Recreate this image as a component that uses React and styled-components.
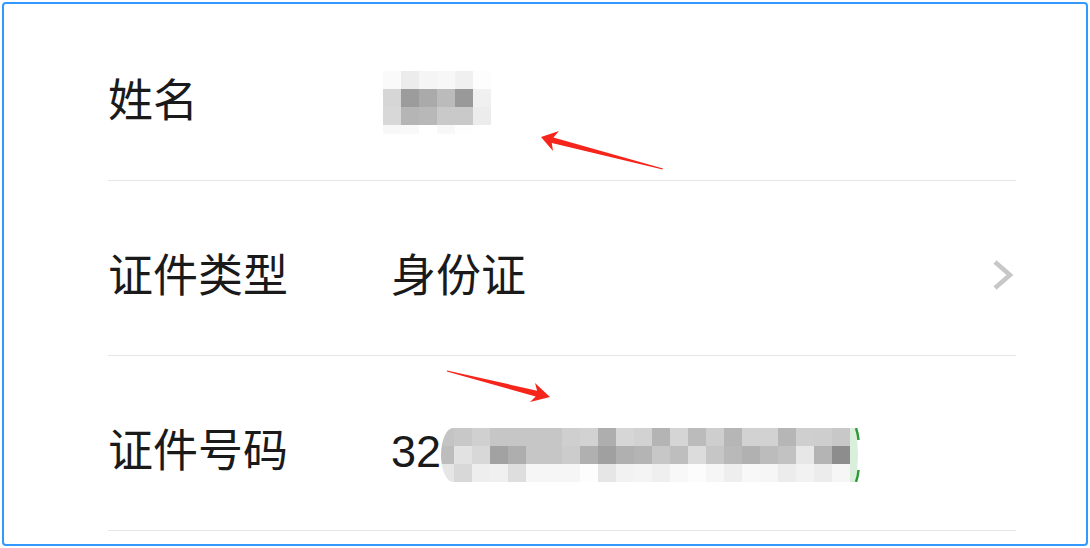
import React from "react";
import styled, { createGlobalStyle } from "styled-components";

const Global = createGlobalStyle`
  html, body { margin: 0; padding: 0; background: #ffffff; }
  body { font-family: "Liberation Sans", "Noto Sans CJK SC", sans-serif; }
`;

const Page = styled.div`
  position: relative;
  width: 1090px;
  height: 548px;
  overflow: hidden;
  background: #ffffff;
`;

const Frame = styled.div`
  box-sizing: border-box;
  margin: 2px;
  width: 1086px;
  height: 544px;
  border: 2px solid #3399ff;
  border-radius: 4px;
  padding: 2px 70px 0 104px;
`;

const List = styled.div`
  display: flex;
  flex-direction: column;
`;

const Row = styled.div`
  box-sizing: border-box;
  height: 175px;
  padding-top: 18px;
  display: flex;
  align-items: center;
  border-bottom: 1px solid #e6e6e6;
`;

const Label = styled.div`
  width: 283px;
  flex: none;
  font-size: 45px;
  line-height: 60px;
  color: #1a1a1a;
  font-family: "Liberation Sans", "Noto Sans CJK SC", sans-serif;
`;

const Value = styled.div`
  flex: 1;
  display: flex;
  align-items: center;
  font-size: 45px;
  line-height: 60px;
  color: #1a1a1a;
  font-family: "Liberation Sans", "Noto Sans CJK SC", sans-serif;
`;

const Mosaic = styled.div`
  display: grid;
  grid-template-columns: ${(p) => p.$cols};
  grid-template-rows: ${(p) => p.$rows};
  margin-left: ${(p) => p.$ml || 0}px;
  margin-top: ${(p) => p.$mt || 0}px;
  border-radius: ${(p) => p.$radius || "0"};
  overflow: hidden;
`;

const Cell = styled.span`
  display: block;
  background: ${(p) => p.$c};
`;

const Chevron = styled.svg`
  flex: none;
  width: 22px;
  height: 32px;
  margin-right: 2px;
  margin-top: -4px;
`;

const GreenEdge = styled.svg`
  flex: none;
  width: 10px;
  height: 54px;
  margin-top: 6px;
`;

const Annotations = styled.svg`
  position: absolute;
  left: 0;
  top: 0;
  width: 1090px;
  height: 548px;
  pointer-events: none;
`;

const nameRows = [
  ["#fafafa", "#ececec", "#f5f5f5", "#f7f7f7", "#f0f0f0", "#fdfdfd"],
  ["#d6d6d6", "#9c9c9c", "#aaaaaa", "#bbbbbb", "#999999", "#f0f0f0"],
  ["#d8d8d8", "#b5b5b5", "#b8b8b8", "#c9c9c9", "#c9c9c9", "#ececec"],
  ["#f8f8f8", "#f9f9f9", "#ffffff", "#f8f8f8", "#fefefe", "#ffffff"],
];

const idRows = [
  ["#c4c4c4", "#c8c8c8", "#d0d0d0", "#c6c6c6", "#c6c6c6", "#c6c6c6", "#c6c6c6", "#cfcfcf", "#d2d2d2", "#aeaeae", "#d6d6d6", "#d2d2d2", "#b4b4b4", "#d5d5d5", "#bbbbbb", "#cecece", "#b6b6b6", "#d2d2d2", "#d2d2d2", "#b6b6b6", "#cfcfcf", "#cecece", "#c8c8c8"],
  ["#bdbdbd", "#e2e2e2", "#d8d8d8", "#a2a2a2", "#aeaeae", "#c6c6c6", "#c6c6c6", "#cccccc", "#b0b0b0", "#a0a0a0", "#b0b0b0", "#b4b4b4", "#c7c7c7", "#bebebe", "#dcdcdc", "#c6c6c6", "#b9b9b9", "#b1b1b1", "#bcbcbc", "#c2c2c2", "#e7e7e7", "#b4b4b4", "#8d8d8d"],
  ["#e6e6e6", "#d8d8d8", "#eeeeee", "#f0f0f0", "#dedede", "#f6f6f6", "#f6f6f6", "#f6f6f6", "#fdfdfd", "#e6e6e6", "#f2f2f2", "#f4f4f4", "#efefef", "#f8f8f8", "#fcfcfc", "#f6f6f6", "#eeeeee", "#f8f8f8", "#f6f6f6", "#ececec", "#f2f2f2", "#ececec", "#f6f6f6"],
];

function renderCells(rows) {
  return rows.flatMap((r, ri) => r.map((c, ci) => <Cell key={`${ri}-${ci}`} $c={c} />));
}

export default function App() {
  return (
    <Page>
      <Global />
      <Frame>
        <List>
          <Row>
            <Label>姓名</Label>
            <Value>
              <Mosaic
                $cols="repeat(6, 18px)"
                $rows="18px 18px 18px 9px"
                $ml={-8}
                $mt={1}
              >
                {renderCells(nameRows)}
              </Mosaic>
            </Value>
          </Row>
          <Row>
            <Label>证件类型</Label>
            <Value>身份证</Value>
            <Chevron viewBox="0 0 22 32">
              <polyline
                points="3,3 18,16 3,29"
                fill="none"
                stroke="#c7c7c7"
                strokeWidth="4.5"
                strokeLinecap="butt"
                strokeLinejoin="miter"
              />
            </Chevron>
          </Row>
          <Row>
            <Label>证件号码</Label>
            <Value>
              <span>32</span>
              <Mosaic
                $cols="13px repeat(22, 18px)"
                $rows="repeat(3, 18px)"
                $mt={6}
                $radius="12px 0 0 12px / 27px 0 0 27px"
              >
                {renderCells(idRows)}
              </Mosaic>
              <GreenEdge viewBox="0 0 10 54">
                <path d="M0 0 L5 0 Q 11 27 5 54 L0 54 Z" fill="#d9eedb" />
                <path d="M6 0 Q 8 6 8.5 12" stroke="#2f9a3c" strokeWidth="2.5" fill="none" />
                <path d="M8.5 42 Q 8 48 6 54" stroke="#2f9a3c" strokeWidth="2.5" fill="none" />
              </GreenEdge>
            </Value>
          </Row>
        </List>
      </Frame>
      <Annotations viewBox="0 0 1090 548">
        <polygon
          points="541,137 559,131 553.4,137.6 663,168.6 662.6,169.6 551.8,143 553,151"
          fill="#f5251b"
        />
        <polygon
          points="550,397 535,383 537.1,390.7 447,370.5 446.8,371.6 535.7,396.5 530,402"
          fill="#f5251b"
        />
      </Annotations>
    </Page>
  );
}
